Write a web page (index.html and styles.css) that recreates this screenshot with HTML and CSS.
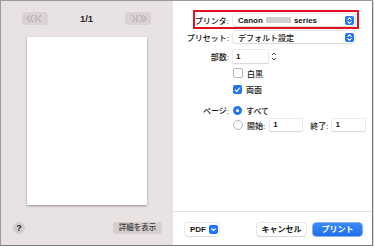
FILE: index.html
```html
<!DOCTYPE html>
<html lang="ja">
<head>
    <meta charset="UTF-8">
    <meta name="viewport" content="width=device-width, initial-scale=1.0">
    <title>プリント</title>
    <link rel="stylesheet" href="styles.css">
</head>
<body>
    <div class="window">
        <!-- preview side -->
        <aside class="preview">
            <div class="pager">
                <span class="nav-btn">
                    <svg width="20" height="9" viewBox="0 0 20 9"><path d="M5 1 L2 4.5 L5 8 M8 1 L5 4.5 L8 8 M11 1 V8 M16 1 L13 4.5 L16 8" /></svg>
                </span>
                <span class="page-count">1/1</span>
                <span class="nav-btn">
                    <svg width="20" height="9" viewBox="0 0 20 9"><path d="M4 1 L7 4.5 L4 8 M9 1 V8 M12 1 L15 4.5 L12 8 M15 1 L18 4.5 L15 8" /></svg>
                </span>
            </div>
            <div class="paper"></div>
            <div class="preview-foot">
                <span class="help">?</span>
                <span class="details-btn">詳細を表示</span>
            </div>
        </aside>

        <!-- settings side -->
        <main class="settings">
            <div class="form">
                <div class="row row-printer">
                    <span class="label">プリンタ:</span>
                    <div class="popup">
                        <span class="latin">Canon</span>
                        <span class="blur"></span>
                        <span class="latin">series</span>
                        <span class="stepper-blue">
                            <svg width="9" height="9" viewBox="0 0 9 9"><path d="M2.5 3.6 L4.5 1.8 L6.5 3.6 M2.5 5.4 L4.5 7.2 L6.5 5.4" /></svg>
                        </span>
                    </div>
                    <span class="highlight"></span>
                </div>
                <div class="row row-preset">
                    <span class="label">プリセット:</span>
                    <div class="popup">
                        <span>デフォルト設定</span>
                        <span class="stepper-blue">
                            <svg width="9" height="9" viewBox="0 0 9 9"><path d="M2.5 3.6 L4.5 1.8 L6.5 3.6 M2.5 5.4 L4.5 7.2 L6.5 5.4" /></svg>
                        </span>
                    </div>
                </div>
                <div class="row row-copies">
                    <span class="label">部数:</span>
                    <span class="field field-copies latin">1</span>
                    <span class="spin">
                        <svg width="8" height="13" viewBox="0 0 8 13"><path d="M2 5 L4 3 L6 5 M2 8 L4 10 L6 8" /></svg>
                    </span>
                </div>
                <div class="row row-bw">
                    <span class="label"></span>
                    <span class="check"></span>
                    <span class="opt">白黒</span>
                </div>
                <div class="row row-duplex">
                    <span class="label"></span>
                    <span class="check checked">
                        <svg width="9" height="9" viewBox="0 0 9 9"><path d="M2 4.7 L3.8 6.5 L7 2.5" /></svg>
                    </span>
                    <span class="opt">両面</span>
                </div>
                <div class="row row-pages">
                    <span class="label">ページ:</span>
                    <span class="radio on"></span>
                    <span class="opt">すべて</span>
                </div>
                <div class="row row-range">
                    <span class="label"></span>
                    <span class="radio"></span>
                    <span class="opt">開始:</span>
                    <span class="field field-from latin">1</span>
                    <span class="opt opt-to">終了:</span>
                    <span class="field field-to latin">1</span>
                </div>
            </div>

            <div class="actions">
                <span class="pdf-btn">
                    <span class="latin">PDF</span>
                    <span class="pdf-arrow">
                        <svg width="9" height="9" viewBox="0 0 9 9"><path d="M2.5 3.5 L4.5 5.5 L6.5 3.5" /></svg>
                    </span>
                </span>
                <span class="spacer"></span>
                <span class="btn">キャンセル</span>
                <span class="btn btn-primary">プリント</span>
            </div>
        </main>
    </div>
</body>
</html>
```

FILE: styles.css
```css
/* General Styles */
body {
    margin: 0;
    background: #ffffff;
    font-family: 'Liberation Sans', 'Noto Sans CJK JP', sans-serif;
    font-size: 8px;
    font-weight: 500;
    color: #161616;
}

.window {
    display: flex;
    width: 371px;
    height: 244px;
    border: 1px solid #9a9a9a;
    border-right-color: #7c7c7c;
    border-bottom-color: #7c7c7c;
    box-shadow: 1px 1px 1px rgba(0, 0, 0, 0.15);
    background: #ffffff;
}

.latin {
    font-family: 'Liberation Sans', sans-serif;
    font-weight: bold;
}

/* Preview */
.preview {
    width: 172px;
    background: #e9e2e3;
    display: flex;
    flex-direction: column;
}

.pager {
    display: flex;
    align-items: center;
    justify-content: space-between;
    padding: 11px 22px 0 21px;
}

.nav-btn {
    display: flex;
    align-items: center;
    justify-content: center;
    width: 26px;
    height: 13px;
    background: #d9d1d2;
    border-radius: 3px;
}

.nav-btn svg path {
    fill: none;
    stroke: #aca4a5;
    stroke-width: 1;
}

.page-count {
    font-family: 'Liberation Sans', sans-serif;
    font-weight: bold;
    font-size: 9.5px;
    color: #2a2a2a;
}

.paper {
    width: 120px;
    height: 168px;
    margin: 12px 0 0 26px;
    background: #ffffff;
    box-shadow: 0 1px 2px rgba(60, 40, 40, 0.45);
}

.preview-foot {
    display: flex;
    align-items: center;
    justify-content: space-between;
    margin-top: 17px;
    padding: 0 11px 0 12px;
}

.help {
    width: 12px;
    height: 12px;
    border-radius: 50%;
    background: #d3cbcc;
    color: #222;
    font-weight: bold;
    font-size: 9px;
    line-height: 12px;
    text-align: center;
}

.details-btn {
    width: 49px;
    height: 12px;
    line-height: 12px;
    text-align: center;
    background: #d6cecf;
    border-radius: 3px;
    font-size: 7.5px;
    color: #3e3839;
}

/* Settings */
.settings {
    flex: 1;
    display: flex;
    flex-direction: column;
}

.form {
    flex: 1;
    padding-top: 13px;
}

.row {
    display: flex;
    align-items: center;
    position: relative;
}

.label {
    width: 56px;
    margin-right: 4px;
    text-align: right;
    flex-shrink: 0;
}

.row-printer { height: 12px; }
.row-preset { height: 12px; margin-top: 5px; }
.row-copies { height: 13px; margin-top: 7px; }
.row-bw { height: 10px; margin-top: 5px; }
.row-duplex { height: 10px; margin-top: 6px; }
.row-pages { height: 10px; margin-top: 11px; }
.row-range { height: 12px; margin-top: 4px; }

.popup {
    display: flex;
    align-items: center;
    gap: 3px;
    width: 117px;
    height: 12px;
    padding-left: 5px;
    background: #ffffff;
    border-radius: 3px;
    box-shadow: 0 0 0 0.5px #d2d2d2, 0 1px 1px rgba(0, 0, 0, 0.12);
}

.blur {
    width: 25px;
    height: 6px;
    background: #cfcfcf;
    border-radius: 1px;
    filter: blur(0.6px);
}

.stepper-blue {
    margin-left: auto;
    margin-right: 1px;
    width: 9px;
    height: 9px;
    border-radius: 2px;
    background: #2276f4;
    display: flex;
}

.stepper-blue svg path,
.pdf-arrow svg path,
.check svg path {
    fill: none;
    stroke: #ffffff;
    stroke-width: 1.2;
}

.highlight {
    position: absolute;
    left: 20px;
    top: -4px;
    width: 162px;
    height: 15px;
    border: 2px solid #e3101e;
}

.field {
    height: 12px;
    line-height: 12px;
    padding-left: 3px;
    background: #ffffff;
    box-shadow: 0 0 0 0.5px #dadada, 0 1px 1px rgba(0, 0, 0, 0.15);
}

.field-copies {
    width: 32px;
    height: 13px;
    line-height: 13px;
}

.spin {
    display: flex;
    margin-left: 2px;
}

.spin svg path {
    fill: none;
    stroke: #555;
    stroke-width: 1;
}

.check {
    width: 8px;
    height: 8px;
    border-radius: 2px;
    border: 0.5px solid #b5b5b5;
    background: #fff;
    display: flex;
}

.check.checked {
    width: 9px;
    height: 9px;
    border: none;
    background: #2276f4;
}

.opt {
    margin-left: 4px;
}

.radio {
    width: 8px;
    height: 8px;
    border-radius: 50%;
    border: 0.5px solid #b5b5b5;
    background: #fff;
}

.radio.on {
    width: 3px;
    height: 3px;
    border: 3px solid #2276f4;
}

.field-from {
    width: 29px;
    margin-left: 5px;
}

.opt-to {
    margin-left: 8px;
}

.field-to {
    width: 30px;
    margin-left: 4px;
}

/* Bottom bar */
.actions {
    height: 34px;
    border-top: 1px solid #e4e4e4;
    display: flex;
    align-items: flex-start;
    padding: 11px 10px 0 12px;
    box-sizing: border-box;
}

.pdf-btn {
    display: flex;
    align-items: center;
    gap: 3px;
    width: 29px;
    height: 13px;
    padding-left: 5px;
    background: #fff;
    border-radius: 3px;
    box-shadow: 0 0 0 0.5px #d4d4d4, 0 1px 1px rgba(0, 0, 0, 0.12);
}

.pdf-arrow {
    width: 9px;
    height: 9px;
    border-radius: 2px;
    background: #2276f4;
    display: flex;
}

.spacer {
    flex: 1;
}

.btn {
    width: 49px;
    height: 13px;
    line-height: 13px;
    text-align: center;
    border-radius: 3px;
    background: #fff;
    box-shadow: 0 0 0 0.5px #cfcfcf, 0 1px 1px rgba(0, 0, 0, 0.15);
    margin-left: 7px;
    font-weight: bold;
}

.btn-primary {
    background: linear-gradient(#3a8af7, #1f6fea);
    color: #fff;
    box-shadow: 0 0 0 0.5px #1a63d6;
}
```
